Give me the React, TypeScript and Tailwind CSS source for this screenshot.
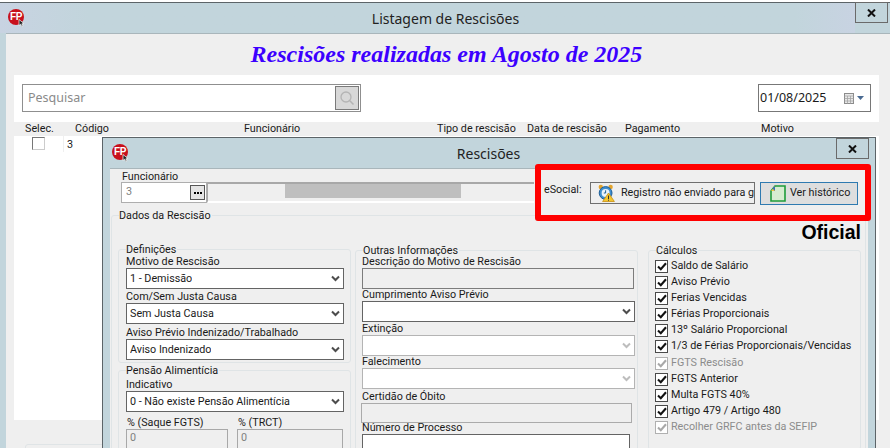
import React from 'react';

// Logo FP com o cursorzinho no canto
const FpLogo = () => (
  <div className="relative w-[16px] h-[16px] rounded-full bg-[#c8101c] flex items-center justify-center">
    <span className="font-['Liberation_Sans',sans-serif] font-bold text-[10px] leading-none tracking-[-0.5px] text-white">FP</span>
    <svg className="absolute left-[10px] top-[10px]" width="7" height="8" viewBox="0 0 7 8">
      <path d="M1 0.5 L1 6.5 L2.6 5.2 L3.8 7.5 L5 7 L3.8 4.8 L6 4.6 Z" fill="#222" stroke="#fff" strokeWidth="0.7" />
    </svg>
  </div>
);

const CloseButton = () => (
  <button className="w-[33px] h-[21px] border border-[#6a6a6a] flex items-center justify-center">
    <svg width="9" height="8" viewBox="0 0 9 8">
      <path d="M1 0.5 L8 7.5 M8 0.5 L1 7.5" stroke="#111" strokeWidth="2" />
    </svg>
  </button>
);

const Chevron = ({ disabled }: { disabled?: boolean }) => (
  <svg width="9" height="7" viewBox="0 0 9 7">
    <path d="M1 1.5 L4.5 5 L8 1.5" fill="none" stroke={disabled ? '#bdbdbd' : '#4d4d4d'} strokeWidth="2" />
  </svg>
);

const Select = ({ value, width, disabled }: { value?: string; width: string; disabled?: boolean }) => (
  <div className={`${width} h-[21px] bg-white border ${disabled ? 'border-[#b4b4b4]' : 'border-[#646464]'} flex items-center justify-between pl-[3px] pr-[3px] shrink-0`}>
    <span className="truncate pt-[1px]">{value}</span>
    <Chevron disabled={disabled} />
  </div>
);

const Label = ({ children, className }: { children: React.ReactNode; className: string }) => (
  <div className={`flex items-end leading-none whitespace-nowrap ${className}`}>{children}</div>
);

const Legend = ({ children }: { children: React.ReactNode }) => (
  <span className="absolute left-[7px] top-[-6px] bg-[#efefef] leading-[11px] pr-[1px] whitespace-nowrap">{children}</span>
);

const Check = ({ label, disabled, h }: { label: string; disabled?: boolean; h: string }) => (
  <div className={`${h} flex items-center gap-[3px] whitespace-nowrap ${disabled ? 'text-[#8c8c8c]' : ''}`}>
    <div className={`w-[13px] h-[13px] shrink-0 bg-white border ${disabled ? 'border-[#b0b0b0]' : 'border-[#4a4a4a]'} flex items-center justify-center`}>
      <svg width="10" height="9" viewBox="0 0 10 9">
        <path d="M1 4.5 L3.8 7.2 L9 1.2" fill="none" stroke={disabled ? '#a8a8a8' : '#111'} strokeWidth="2.1" />
      </svg>
    </div>
    <span>{label}</span>
  </div>
);

// Despertador com triângulo de aviso
const AlarmIcon = () => (
  <svg width="17" height="18" viewBox="0 0 17 18" className="shrink-0">
    <circle cx="2.8" cy="3" r="2.2" fill="#e3a32c" />
    <circle cx="12.6" cy="3" r="2.2" fill="#e3a32c" />
    <circle cx="7.6" cy="9" r="6.4" fill="#3f8fd0" stroke="#1f5f97" strokeWidth="1" />
    <circle cx="7.6" cy="9" r="4" fill="#e9f3fb" />
    <path d="M7.6 6.3 V9 H5.8" stroke="#1f5f97" strokeWidth="1" fill="none" />
    <path d="M10.5 9 L16.4 17.5 H4.6 Z" fill="#f3c630" stroke="#c98f12" strokeWidth="0.8" />
    <path d="M10.5 11.5 V15 M10.5 15.7 V16.7" stroke="#333" strokeWidth="1" />
  </svg>
);

const HistoryIcon = () => (
  <svg width="16" height="17" viewBox="0 0 16 17" className="shrink-0">
    <path d="M5 1 H15 V16 H1 V6 Z" fill="#d6ecd0" stroke="#1f9c3a" strokeWidth="1.6" />
    <path d="M5 1 V6 H1 Z" fill="#f0c445" />
    <path d="M5 1 L5 6 L2.5 3.6 Z" fill="#3f6fb5" />
  </svg>
);

const CalendarIcon = () => (
  <svg width="20" height="11" viewBox="0 0 20 11">
    <rect x="0.5" y="0.5" width="9" height="10" fill="#e8e8e8" stroke="#8c8c8c" />
    <path d="M0.5 3 H9.5 M0.5 5.5 H9.5 M0.5 8 H9.5 M3.5 3 V10.5 M6.5 3 V10.5" stroke="#a4a4a4" strokeWidth="0.8" />
    <path d="M13 3 H20 L16.5 7 Z" fill="#4a6a92" />
  </svg>
);

const Dialog = () => (
  <div className="absolute left-[102px] top-[137px] w-[774px] h-[330px] bg-[#c2d5dc] border border-[#5c6468] flex flex-col">
    <div className="h-[30px] shrink-0 relative flex items-center justify-center">
      <div className="absolute left-[9px] top-[6px]"><FpLogo /></div>
      <span className="font-['Noto_Sans',sans-serif] text-[14px] text-[#222] mr-[1px]">Rescisões</span>
      <div className="absolute right-[6px] top-0"><CloseButton /></div>
    </div>
    <div className="flex-1 mx-[7px] bg-[#efefef] border-t border-[#a9b6bb] relative flex flex-col">
      {/* funcionário */}
      <div className="h-[35px] shrink-0 pl-[11px] flex flex-col">
        <div className="h-[13px] leading-[15px] pl-[1px]">Funcionário</div>
        <div className="flex h-[21px]">
          <div className="w-[86px] h-[21px] bg-white border border-[#aeaeae] flex items-center justify-between pl-[4px] pr-[1px] text-[#808080]">
            <span>3</span>
            <div className="w-[15px] h-[15px] bg-[#e4e4e4] border border-[#555] flex items-center justify-center gap-[1px]">
              <i className="w-[2px] h-[2px] bg-black" /><i className="w-[2px] h-[2px] bg-black" /><i className="w-[2px] h-[2px] bg-black" />
            </div>
          </div>
          <div className="w-[327px] h-[21px] border-t-2 border-l border-b-2 border-t-[#a8a8a8] border-l-[#a8a8a8] border-b-white pl-[77px]">
            <div className="w-[176px] h-[14px] bg-[#bfbfbf]" />
          </div>
        </div>
      </div>

      {/* eSocial em destaque */}
      <div className="absolute left-[425px] top-[-5px] w-[336px] h-[57px] rounded-[3px] border-[6px] border-[#ff0000] bg-[#efefef] flex items-start pl-[3px] pt-[12px] z-10">
        <span className="w-[46px] mt-[1px] leading-[13px]">eSocial:</span>
        <div className="w-[165px] h-[22px] border border-[#6f6f6f] flex items-center gap-[6px] pl-[7px] overflow-hidden whitespace-nowrap">
          <AlarmIcon />
          <span>Registro não enviado para geração</span>
        </div>
        <div className="ml-[5px] w-[98px] h-[23px] bg-[#dedede] border border-[#2f7ab0] flex items-center gap-[4px] pl-[9px]">
          <HistoryIcon />
          <span>Ver histórico</span>
        </div>
      </div>

      {/* dados da rescisão */}
      <div className="mt-[11px] ml-[1px] mr-[2px] flex-1 border border-[#dfe4e6] rounded-[3px] relative">
        <Legend>Dados da Rescisão</Legend>
        <div className="h-[33px] flex items-end justify-end pr-[4px] pb-[7px] font-['Liberation_Sans',sans-serif] font-bold text-[19.5px] leading-none text-black">Oficial</div>

        <div className="flex pl-[6px] items-start">
          <div className="w-[233px] flex flex-col gap-[7px] shrink-0">
            <div className="relative h-[114px] border border-[#dfe4e6] rounded-[3px] pl-[7px]">
              <Legend>Definições</Legend>
              <Label className="h-[18px]">Motivo de Rescisão</Label>
              <Select value="1 - Demissão" width="w-[218px]" />
              <Label className="h-[14px]">Com/Sem Justa Causa</Label>
              <Select value="Sem Justa Causa" width="w-[218px]" />
              <Label className="h-[15px]">Aviso Prévio Indenizado/Trabalhado</Label>
              <Select value="Aviso Indenizado" width="w-[218px]" />
            </div>
            <div className="relative h-[100px] border border-[#dfe4e6] rounded-[3px] pl-[7px]">
              <Legend>Pensão Alimentícia</Legend>
              <Label className="h-[20px]">Indicativo</Label>
              <Select value="0 - Não existe Pensão Alimentícia" width="w-[218px]" />
              <div className="flex gap-[9px]">
                <div className="w-[102px]">
                  <Label className="h-[17px] pl-[1px]">% (Saque FGTS)</Label>
                  <div className="h-[24px] border border-[#a8a8a8] pl-[3px] text-[#808080]">0</div>
                </div>
                <div className="w-[106px]">
                  <Label className="h-[17px] pl-[1px]">% (TRCT)</Label>
                  <div className="h-[24px] border border-[#a8a8a8] pl-[3px] text-[#808080]">0</div>
                </div>
              </div>
            </div>
          </div>

          <div className="ml-[4px] w-[283px] h-[240px] shrink-0 relative border border-[#dfe4e6] rounded-[3px] pl-[6px] mt-[1px]">
            <Legend>Outras Informações</Legend>
            <Label className="h-[17px]">Descrição do Motivo de Rescisão</Label>
            <div className="w-[272px] h-[21px] border border-[#7c7c7c]" />
            <Label className="h-[12px]">Cumprimento Aviso Prévio</Label>
            <Select width="w-[273px]" />
            <Label className="h-[13px]">Extinção</Label>
            <Select width="w-[273px]" disabled />
            <Label className="h-[12px]">Falecimento</Label>
            <Select width="w-[273px]" disabled />
            <Label className="h-[14px]">Certidão de Óbito</Label>
            <div className="w-[271px] h-[20px] -ml-[1px] border border-[#ababab]" />
            <Label className="h-[11px]">Número de Processo</Label>
            <div className="w-[268px] h-[30px] bg-white border border-[#646464]" />
          </div>

          <div className="ml-[10px] w-[213px] h-[200px] shrink-0 relative border border-[#dfe4e6] rounded-[3px] pl-[6px] pt-[7px] mt-[1px]">
            <Legend>Cálculos</Legend>
            <Check h="h-[16px]" label="Saldo de Salário" />
            <Check h="h-[16px]" label="Aviso Prévio" />
            <Check h="h-[16px]" label="Ferias Vencidas" />
            <Check h="h-[16px]" label="Férias Proporcionais" />
            <Check h="h-[16px]" label="13º Salário Proporcional" />
            <Check h="h-[17px]" label="1/3 de Férias Proporcionais/Vencidas" />
            <Check h="h-[17px]" label="FGTS Rescisão" disabled />
            <Check h="h-[15px]" label="FGTS Anterior" />
            <Check h="h-[16px]" label="Multa FGTS 40%" />
            <Check h="h-[16px]" label="Artigo 479 / Artigo 480" />
            <Check h="h-[16px]" label="Recolher GRFC antes da SEFIP" disabled />
          </div>
        </div>
      </div>
    </div>
  </div>
);

export default function App() {
  return (
    <div className="relative w-[890px] h-[448px] overflow-hidden bg-white font-['Roboto','Noto_Sans',sans-serif] text-[10.75px] text-[#1a1a1a]">
      <div className="h-[2px] bg-white" />
      {/* janela de listagem */}
      <div className="h-[446px] border-t border-[#5c6468] bg-[#c2d5dc] flex flex-col">
        <div className="h-[30px] shrink-0 relative flex items-center justify-center bg-gradient-to-r from-[#c8d3e2] via-[#c2d5dc] via-10% to-[#c2d5dc]">
          <div className="absolute left-[8px] top-[6px]"><FpLogo /></div>
          <span className="font-['Noto_Sans',sans-serif] text-[14px] text-[#222] ml-[1px]">Listagem de Rescisões</span>
          <div className="absolute right-[35px] top-0 w-[60px] h-full bg-gradient-to-r from-[#c2d5dc] to-[#c8d3e2]" />
          <div className="absolute right-[2px] top-[-1px]"><CloseButton /></div>
        </div>
        <div className="flex-1 ml-[6px] bg-[#efefef] border-t border-[#a9b6bb] pl-[8px] pr-[11px] flex flex-col">
          <div className="h-[41px] shrink-0 flex items-center justify-center pb-[2px]">
            <span className="font-['Liberation_Serif',serif] font-bold italic text-[24px] leading-none text-[#3c00ff]">Rescisões realizadas em Agosto de 2025</span>
          </div>
          <div className="h-[47px] shrink-0 bg-white flex items-start pt-[9px] pl-[8px]">
            <div className="w-[339px] h-[28px] border border-[#8f8f8f] flex items-center justify-between pl-[5px] pr-[1px] font-['Noto_Sans',sans-serif] text-[12.5px] text-[#8a8a8a]">
              <span>Pesquisar</span>
              <div className="w-[24px] h-[24px] bg-[#d8d8d8] border border-[#7a7a7a] flex items-center justify-center">
                <svg width="16" height="16" viewBox="0 0 16 16" fill="none">
                  <circle cx="7" cy="7" r="5" stroke="#b4b4b4" strokeWidth="1.3" />
                  <path d="M10.8 10.8 L14.5 14.5" stroke="#b4b4b4" strokeWidth="1.6" />
                </svg>
              </div>
            </div>
            <div className="ml-[397px] w-[113px] h-[28px] border border-[#777] flex items-center justify-between pl-[1px] pr-[6px] font-['Noto_Sans',sans-serif] text-[12.5px]">
              <span>01/08/2025</span>
              <CalendarIcon />
            </div>
          </div>
          <div className="h-[14px] shrink-0 flex items-center pl-[11px] pt-[1px] whitespace-nowrap">
            <span className="w-[50px]">Selec.</span>
            <span className="w-[169px]">Código</span>
            <span className="w-[193px]">Funcionário</span>
            <span className="w-[90px]">Tipo de rescisão</span>
            <span className="w-[98px]">Data de rescisão</span>
            <span className="w-[136px]">Pagamento</span>
            <span>Motivo</span>
          </div>
          <div className="h-[284px] shrink-0 bg-white">
            <div className="h-[16px] flex items-start">
              <div className="w-[50px] h-[16px] border-r border-[#efefef] pl-[18px] pt-[1px]">
                <div className="w-[13px] h-[13px] bg-white border-t border-l border-t-[#777] border-l-[#777] border-r border-b border-r-[#ccc] border-b-[#ccc]" />
              </div>
              <span className="pl-[3px] leading-[18px]">3</span>
            </div>
          </div>
          <div className="mt-[24px] ml-[11px] w-[120px] h-[30px] border border-[#dfe4e6] rounded-[3px]" />
        </div>
      </div>
      <Dialog />
    </div>
  );
}
